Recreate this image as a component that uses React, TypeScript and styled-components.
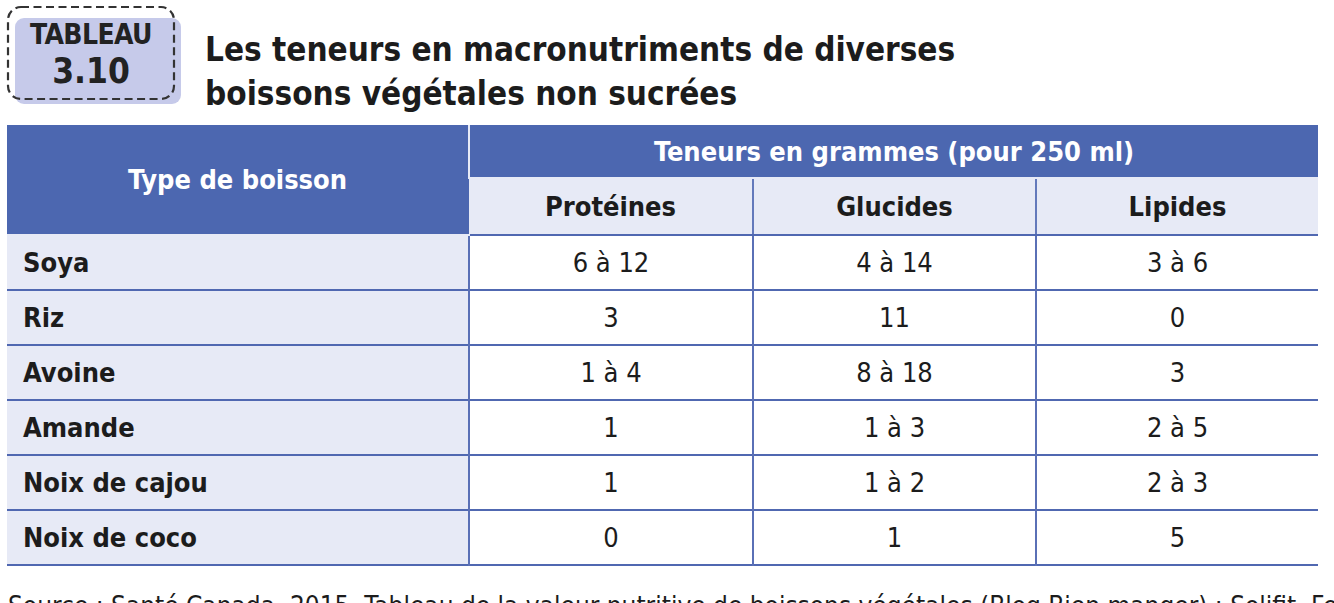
import React from "react";
import styled, { createGlobalStyle } from "styled-components";

const Global = createGlobalStyle`
  html, body { margin: 0; padding: 0; background: #ffffff; }
  body {
    font-family: "DejaVu Sans Condensed", "DejaVu Sans", sans-serif;
    font-stretch: condensed;
    color: #1c1c1c;
    overflow: hidden;
  }
`;

const Page = styled.div`
  width: 1334px;
  height: 603px;
  overflow: hidden;
  box-sizing: border-box;
  padding: 6px 16px 0 7px;
`;

const Header = styled.div`
  display: flex;
  align-items: flex-start;
  gap: 30px;
  height: 119px;
`;

const Badge = styled.div`
  position: relative;
  isolation: isolate;
  width: 168px;
  height: 94px;
  flex: none;
  display: flex;
  flex-direction: column;
  align-items: center;
  justify-content: center;
  gap: 4px;
  font-weight: bold;
  color: #222;
  &::before {
    content: "";
    position: absolute;
    top: 12px;
    left: 8px;
    right: -6px;
    bottom: -4px;
    background: #c6caea;
    border-radius: 9px;
    z-index: -1;
  }
`;

const Frame = styled.svg`
  position: absolute;
  inset: 0;
  overflow: visible;
`;

const BadgeLabel = styled.span`
  font-size: 28px;
  letter-spacing: -0.6px;
  line-height: 30px;
  margin-top: 2px;
`;

const BadgeNumber = styled.span`
  font-size: 35px;
  line-height: 34px;
`;

const Title = styled.h1`
  margin: 22px 0 0;
  font-size: 33px;
  font-weight: 600;
  line-height: 44px;
  color: #1c1c1c;
`;

const Table = styled.table`
  width: 1311px;
  border-collapse: collapse;
  table-layout: fixed;
`;

const HeadCell = styled.th<{ $tone: "blue" | "light" }>`
  background: ${(p) => (p.$tone === "blue" ? "#4c67b0" : "#e7eaf6")};
  color: ${(p) => (p.$tone === "blue" ? "#ffffff" : "#1c1c1c")};
  font-size: 27px;
  font-weight: bold;
  text-align: center;
  padding: 0;
  height: ${(p) => (p.$tone === "blue" ? "52px" : "55px")};
  border-left: 2px solid ${(p) => (p.$tone === "blue" ? "#e7eaf6" : "#6379bb")};
  border-bottom: 2px solid ${(p) => (p.$tone === "blue" ? "#e7eaf6" : "#5068b1")};
  &:first-child { border-left: none; }
`;

const Row = styled.tr`
  height: 55px;
  border-bottom: 2px solid #5068b1;
`;

const NameCell = styled.td`
  background: #e7eaf6;
  font-size: 27px;
  font-weight: bold;
  padding: 0 0 0 16px;
`;

const ValueCell = styled.td`
  background: #ffffff;
  font-size: 27px;
  text-align: center;
  padding: 0;
  border-left: 2px solid #5a70b6;
`;

const Source = styled.p`
  margin: 25px 0 0 1px;
  font-size: 26px;
  white-space: nowrap;
  color: #1c1c1c;
`;

const rows: [string, string, string, string][] = [
  ["Soya", "6 à 12", "4 à 14", "3 à 6"],
  ["Riz", "3", "11", "0"],
  ["Avoine", "1 à 4", "8 à 18", "3"],
  ["Amande", "1", "1 à 3", "2 à 5"],
  ["Noix de cajou", "1", "1 à 2", "2 à 3"],
  ["Noix de coco", "0", "1", "5"],
];

export default function App() {
  return (
    <>
      <Global />
      <Page>
        <Header>
          <Badge>
            <Frame width="168" height="94" viewBox="0 0 168 94">
              <rect
                x="1"
                y="1"
                width="166"
                height="92"
                rx="13"
                fill="none"
                stroke="#333"
                strokeWidth="2.2"
                strokeDasharray="8 4.5"
              />
            </Frame>
            <BadgeLabel>TABLEAU</BadgeLabel>
            <BadgeNumber>3.10</BadgeNumber>
          </Badge>
          <Title>
            Les teneurs en macronutriments de diverses
            <br />
            boissons végétales non sucrées
          </Title>
        </Header>
        <Table>
          <colgroup>
            <col style={{ width: 462 }} />
            <col style={{ width: 284 }} />
            <col style={{ width: 283 }} />
            <col style={{ width: 282 }} />
          </colgroup>
          <thead>
            <tr>
              <HeadCell $tone="blue" rowSpan={2}>
                Type de boisson
              </HeadCell>
              <HeadCell $tone="blue" colSpan={3}>
                Teneurs en grammes (pour 250 ml)
              </HeadCell>
            </tr>
            <tr>
              <HeadCell $tone="light">Protéines</HeadCell>
              <HeadCell $tone="light">Glucides</HeadCell>
              <HeadCell $tone="light">Lipides</HeadCell>
            </tr>
          </thead>
          <tbody>
            {rows.map((r) => (
              <Row key={r[0]}>
                <NameCell>{r[0]}</NameCell>
                <ValueCell>{r[1]}</ValueCell>
                <ValueCell>{r[2]}</ValueCell>
                <ValueCell>{r[3]}</ValueCell>
              </Row>
            ))}
          </tbody>
        </Table>
        <Source>
          Source : Santé Canada, 2015, Tableau de la valeur nutritive de boissons végétales (Blog Bien manger) ; Solifit, Fermer
        </Source>
      </Page>
    </>
  );
}
